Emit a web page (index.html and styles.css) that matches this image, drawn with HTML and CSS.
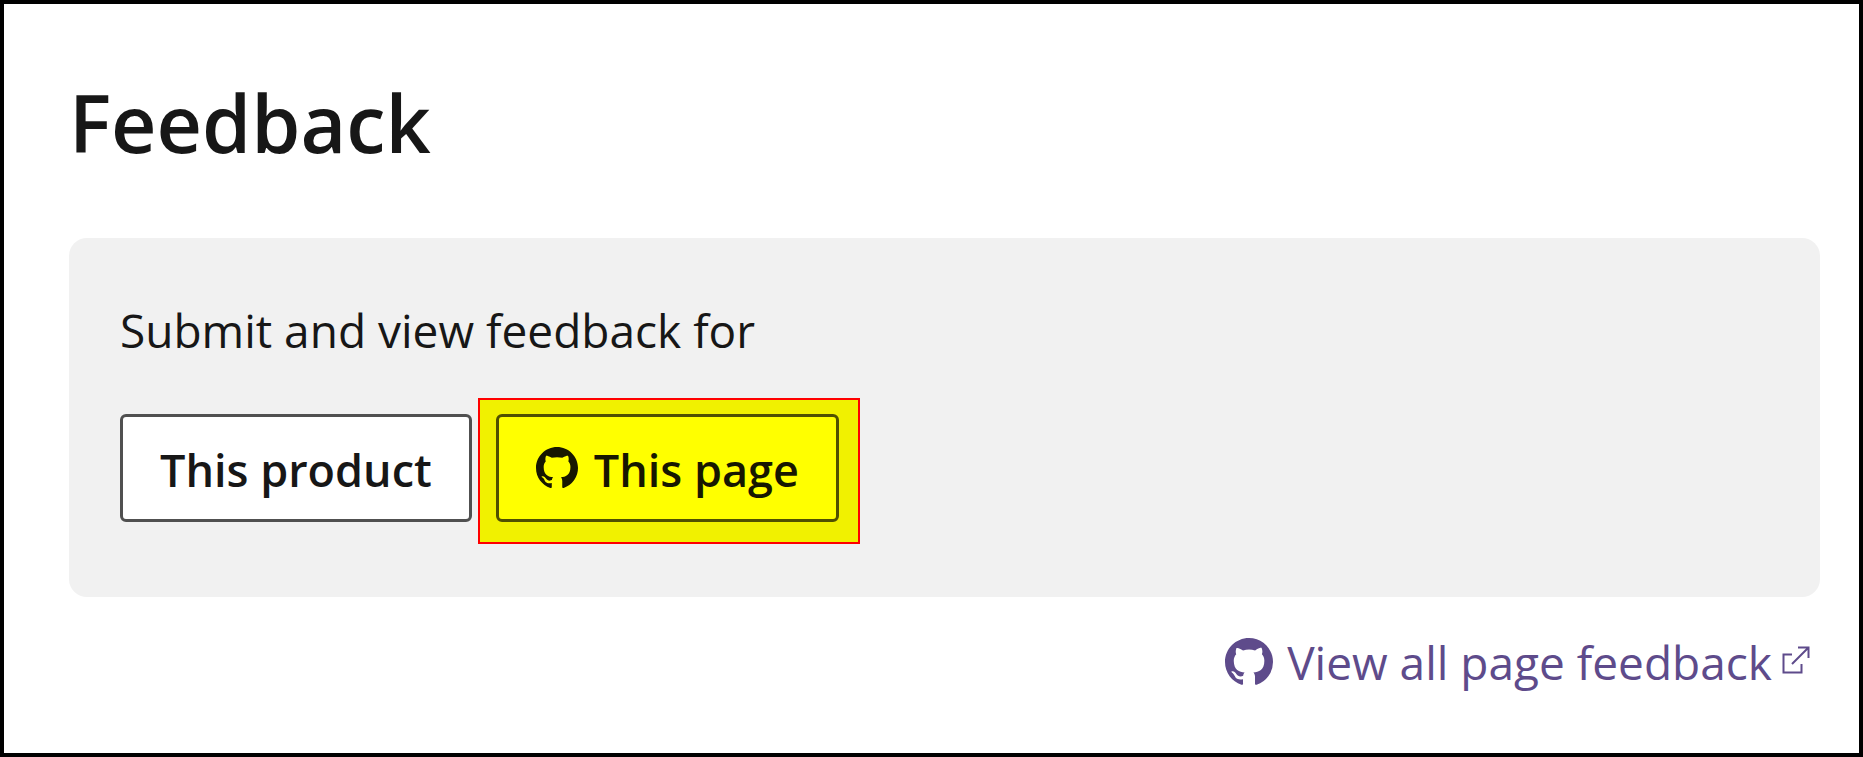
FILE: index.html
```html
<!DOCTYPE html>
<html lang="en">
<head>
<meta charset="utf-8">
<title>Feedback</title>
<link rel="stylesheet" href="styles.css">
</head>
<body>
<svg class="symbols" aria-hidden="true">
  <symbol id="github" viewBox="0 0 16 16">
    <path d="M8 0C3.58 0 0 3.58 0 8c0 3.54 2.29 6.53 5.47 7.59.4.07.55-.17.55-.38 0-.19-.01-.82-.01-1.49-2.01.37-2.53-.49-2.69-.94-.09-.23-.48-.94-.82-1.13-.28-.15-.68-.52-.01-.53.63-.01 1.08.58 1.23.82.72 1.21 1.87.87 2.33.66.07-.52.28-.87.51-1.07-1.78-.2-3.64-.89-3.64-3.95 0-.87.31-1.59.82-2.15-.08-.2-.36-1.02.08-2.12 0 0 .67-.21 2.2.82.64-.18 1.32-.27 2-.27s1.36.09 2 .27c1.53-1.04 2.2-.82 2.2-.82.44 1.1.16 1.92.08 2.12.51.56.82 1.27.82 2.15 0 3.07-1.87 3.75-3.65 3.95.29.25.54.73.54 1.48 0 1.07-.01 1.93-.01 2.2 0 .21.15.46.55.38A8.01 8.01 0 0 0 16 8c0-4.42-3.58-8-8-8z"/>
  </symbol>
</svg>
<main class="feedback">
  <h1 class="feedback-title">Feedback</h1>
  <section class="panel">
    <p class="panel-text">Submit and view feedback for</p>
    <div class="actions">
      <button class="button button-plain" type="button">This product</button>
      <div class="highlight">
        <button class="button button-marked" type="button">
          <svg class="button-icon" aria-hidden="true"><use href="#github"/></svg>
          This page
        </button>
      </div>
    </div>
  </section>
  <a class="all-feedback" href="#">
    <svg class="link-icon" aria-hidden="true"><use href="#github"/></svg>
    <span>View all page feedback</span>
    <svg class="external-icon" viewBox="0 0 28 28" aria-hidden="true">
      <path d="M10 8.500H1.500V26.500H19.500V18M10 18L26 2M16 1.500H26.500V12" fill="none" stroke="currentColor" stroke-width="2"/>
    </svg>
  </a>
</main>
</body>
</html>
```
FILE: styles.css
```css
* {
  box-sizing: border-box;
}

body {
  margin: 0;
  min-height: 100vh;
  border: 4px solid #000;
  background: #fff;
  color: #171717;
  font: 46px/64px "Open Sans", "Noto Sans", sans-serif;
}

.symbols {
  display: none;
}

.feedback {
  display: flex;
  flex-direction: column;
  padding: 63px 39px 0 65px;
}

.feedback-title {
  margin: 0 0 59px;
  font-size: 79px;
  font-weight: 600;
  line-height: 112px;
}

.panel {
  padding: 60px 51px 53px;
  border-radius: 18px;
  background: #f1f1f1;
}

.panel-text {
  margin: 0 0 36px;
}

.actions {
  display: flex;
  align-items: flex-start;
  gap: 6px;
}

.button {
  display: flex;
  align-items: center;
  gap: 16px;
  padding: 21px 37px 17px;
  border: 3px solid #505050;
  border-radius: 6px;
  background: #fff;
  color: #171717;
  font: inherit;
  font-size: 45px;
  font-weight: 600;
  cursor: pointer;
}

.button-plain {
  margin-top: 16px;
}

.highlight {
  padding: 14px 19px 20px 16px;
  border: 2px solid #f00;
  background: #f1f100;
}

.button-marked {
  border-color: #505000;
  background: #ff0;
  color: #171700;
}

.button-icon {
  width: 42px;
  height: 42px;
  margin-bottom: 4px;
  fill: currentColor;
}

.all-feedback {
  display: flex;
  align-items: center;
  align-self: flex-end;
  margin: 33px 10px 0 0;
  color: #5e4b8b;
  text-decoration: none;
}

.link-icon {
  width: 48px;
  height: 48px;
  margin-right: 14px;
  fill: currentColor;
}

.external-icon {
  width: 28px;
  height: 28px;
  margin: 0 0 4px 10px;
}
```
